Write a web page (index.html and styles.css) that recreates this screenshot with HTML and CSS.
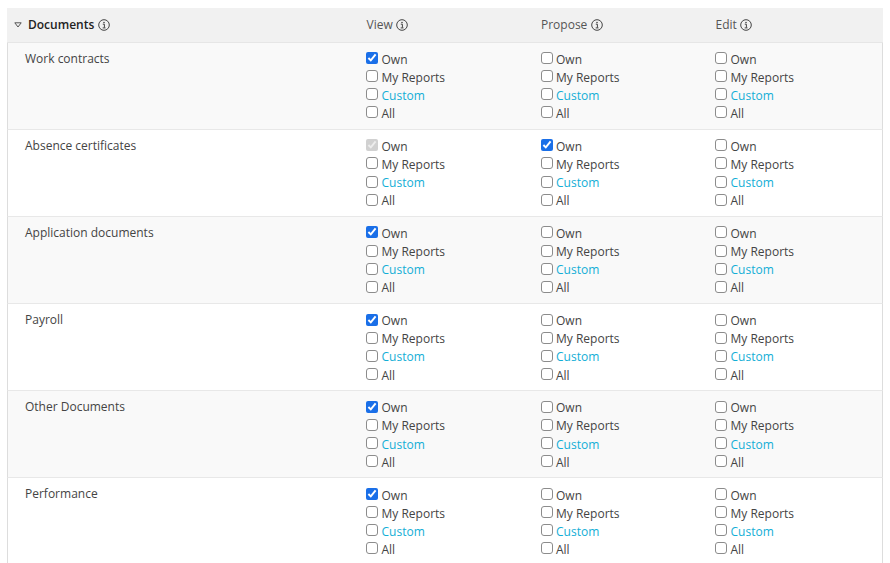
FILE: index.html
```html
<!DOCTYPE html>
<html lang="en">
<head>
<meta charset="utf-8">
<title>Documents permissions</title>
<link rel="stylesheet" href="styles.css">
</head>
<body>
<svg class="defs" width="0" height="0" aria-hidden="true">
  <symbol id="info" viewBox="0 0 12 12">
    <circle cx="6" cy="6" r="5.3" fill="none" stroke="currentColor" stroke-width="1"/>
    <circle cx="6" cy="3.5" r=".8" fill="currentColor"/>
    <path d="M4.8 5.2H6.4V8.7M4.7 8.9H7.5" fill="none" stroke="currentColor" stroke-width="1"/>
  </symbol>
</svg>
<div class="panel" id="panel">
  <div class="row head">
    <div class="name"><svg class="caret" viewBox="0 0 8 6"><path d="M.8.8H7.2L4 5Z" fill="none" stroke="currentColor"/></svg><strong>Documents</strong><svg class="info"><use href="#info"/></svg></div>
    <div class="cell">View<svg class="info"><use href="#info"/></svg></div>
    <div class="cell">Propose<svg class="info"><use href="#info"/></svg></div>
    <div class="cell">Edit<svg class="info"><use href="#info"/></svg></div>
  </div>
</div>
<script src="app.js"></script>
</body>
</html>
```
FILE: app.js
```js
const rows = [
  ["Work contracts", "v", ""],
  ["Absence certificates", "d", "p"],
  ["Application documents", "v", ""],
  ["Payroll", "v", ""],
  ["Other Documents", "v", ""],
  ["Performance", "v", ""]
];
const options = ["Own", "My Reports", "Custom", "All"];
const panel = document.getElementById("panel");
function column(ownState) {
  const col = document.createElement("div");
  col.className = "options";
  options.forEach((text, i) => {
    const label = document.createElement("label");
    label.className = "opt";
    const box = document.createElement("input");
    box.type = "checkbox";
    if (i === 0 && ownState) { box.checked = true; box.disabled = ownState === "d"; }
    const span = document.createElement("span");
    span.textContent = text;
    if (text === "Custom") span.className = "link";
    label.append(box, span);
    col.append(label);
  });
  return col;
}
rows.forEach(([name, view, propose]) => {
  const row = document.createElement("div");
  row.className = "row body";
  const title = document.createElement("div");
  title.className = "title";
  title.textContent = name;
  row.append(title, column(view), column(propose), column(""));
  panel.append(row);
});
```
FILE: styles.css
```css
html, body { margin: 0; height: 563px; overflow: hidden; background: #fff; }
body { padding: 8px 7px 0; box-sizing: border-box; font: 12px/18px "Open Sans", sans-serif; color: #444; }
.defs { position: absolute; }
.panel { width: 876px; }
.row { display: grid; grid-template-columns: 358px 174.5px 174.5px 1fr; box-sizing: border-box; }
.head { height: 34.5px; background: #f1f1f1; align-items: center; border-bottom: 1px solid #e6e6e6; }
.head .name { display: flex; align-items: center; padding-left: 7px; color: #222; }
.head strong { font-weight: 600; }
.caret { width: 8px; height: 6px; margin-right: 6px; color: #555; }
.cell { display: flex; align-items: center; padding-left: 1.5px; color: #555; }
.info { width: 12px; height: 12px; margin-left: 3.5px; color: #444; }
.body { height: 87.2px; border-left: 1px solid #ddd; border-right: 1px solid #ddd; border-bottom: 1px solid #e8e8e8; }
.body:nth-child(even) { background: #f9f9f9; }
.title { padding: 7px 0 0 17px; }
.options { padding-top: 8px; }
.opt { display: flex; align-items: center; height: 18.15px; }
.opt input { width: 12px; height: 12px; margin: -3px 3.5px 0 0; accent-color: #1a6fe8; flex: none; }
.opt input:not(:checked) { appearance: none; box-sizing: border-box; background: #fff; border: 1px solid #8c8c8c; border-radius: 3px; }
.link { color: #13aed6; }
```
